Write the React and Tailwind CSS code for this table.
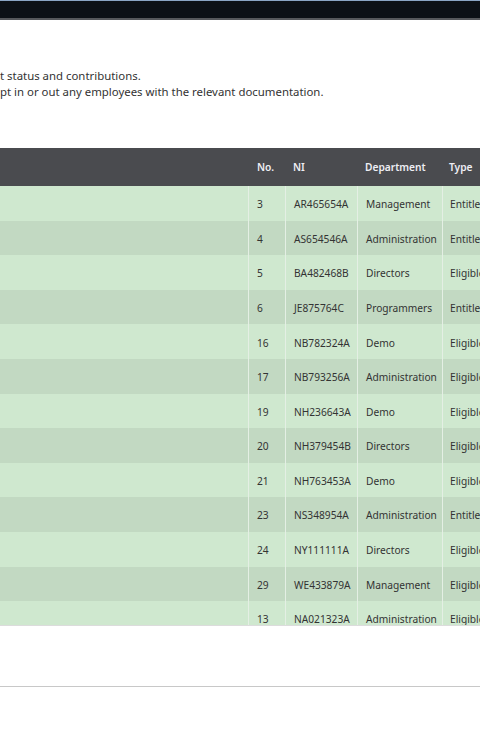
const rows = [
  ["3", "AR465654A", "Management", "Entitled"],
  ["4", "AS654546A", "Administration", "Entitled"],
  ["5", "BA482468B", "Directors", "Eligible"],
  ["6", "JE875764C", "Programmers", "Entitled"],
  ["16", "NB782324A", "Demo", "Eligible"],
  ["17", "NB793256A", "Administration", "Eligible"],
  ["19", "NH236643A", "Demo", "Eligible"],
  ["20", "NH379454B", "Directors", "Eligible"],
  ["21", "NH763453A", "Demo", "Eligible"],
  ["23", "NS348954A", "Administration", "Entitled"],
  ["24", "NY111111A", "Directors", "Eligible"],
  ["29", "WE433879A", "Management", "Eligible"],
  ["13", "NA021323A", "Administration", "Eligible"],
];

export default function App() {
  return (
    <div className="w-[480px] h-[750px] overflow-hidden bg-white font-['Noto_Sans',sans-serif] text-[#333]">
      {/* top bar */}
      <div className="h-[1px] bg-[#8aa4c4]" />
      <div className="h-[17px] bg-[#0c1016]" />
      <div className="h-[2px] bg-[#56585c]" />

      <div className="pt-[48px] text-[11.4px] leading-[16px] whitespace-nowrap">
        <p>t status and contributions.</p>
        <p>pt in or out any employees with the relevant documentation.</p>
      </div>

      <div className="mt-[48px] h-[478px] overflow-hidden border-b border-[#dcdcdc]">
        <div className="w-[560px] text-[10.2px]">
          <div className="flex h-[38px] items-center bg-[#4a4b4f] pt-[2px] font-semibold text-[#eeeef4]">
            <div className="w-[249px] shrink-0" />
            <div className="w-[36px] shrink-0 pl-[8px]">No.</div>
            <div className="w-[72px] shrink-0 pl-[8px]">NI</div>
            <div className="w-[85px] shrink-0 pl-[8px]">Department</div>
            <div className="flex-1 pl-[7px]">Type</div>
          </div>
          {rows.map((r, i) => (
            <div
              key={r[1]}
              className={`flex h-[34.6px] items-center ${i % 2 === 0 ? "bg-[#cfe8cf]" : "bg-[#c2d9c2]"}`}
            >
              <div className="w-[248px] shrink-0 self-stretch" />
              <div className="w-[37px] shrink-0 self-stretch flex items-center border-l border-[#e4efe4] pl-[8px] pt-[3px]">{r[0]}</div>
              <div className="w-[72px] shrink-0 self-stretch flex items-center border-l border-[#e4efe4] pl-[8px] pt-[3px]">{r[1]}</div>
              <div className="w-[85px] shrink-0 self-stretch flex items-center border-l border-[#e4efe4] pl-[8px] pt-[3px]">{r[2]}</div>
              <div className="flex-1 self-stretch flex items-center border-l border-[#e4efe4] pl-[7px] pt-[3px]">{r[3]}</div>
            </div>
          ))}
        </div>
      </div>

      <div className="mt-[60px] h-[1px] bg-[#c8c8c8]" />
    </div>
  );
}
